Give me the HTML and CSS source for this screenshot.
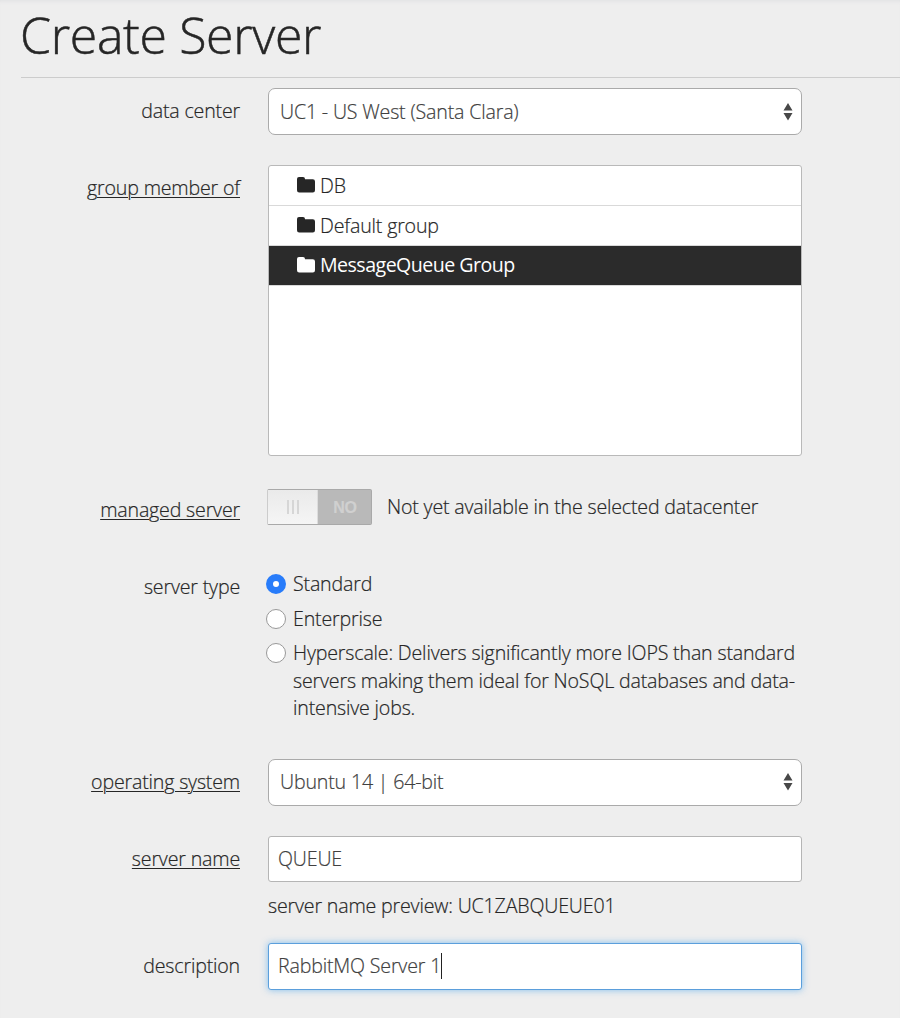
FILE: index.html
```html
<!DOCTYPE html>
<html lang="en">
<head>
<meta charset="utf-8">
<title>Create Server</title>
<link rel="stylesheet" href="styles.css">
</head>
<body>
<svg class="defs" width="0" height="0" aria-hidden="true">
  <symbol id="folder" viewBox="0 0 18 16"><path d="M2 0H6Q8 0 8 2V2.3H15.8Q18 2.3 18 4.5V13.3Q18 15.5 15.8 15.5H2.2Q0 15.5 0 13.3V2Q0 0 2 0Z" fill="currentColor"/></symbol>
  <symbol id="arrows" viewBox="0 0 10 18"><path d="M5 0L9.5 7.5H.5ZM.5 10H9.5L5 17.5Z" fill="#484848"/></symbol>
</svg>
<main class="page">
  <h1 class="title">Create Server</h1>
  <form class="form">
    <div class="row row-center">
      <span class="label">data center</span>
      <div class="field select"><span>UC1 - US West (Santa Clara)</span><svg class="arrows"><use href="#arrows"/></svg></div>
    </div>
    <div class="row row-group">
      <span class="label linked">group member of</span>
      <ul class="groups">
        <li class="group"><svg class="folder"><use href="#folder"/></svg><span>DB</span></li>
        <li class="group"><svg class="folder"><use href="#folder"/></svg><span>Default group</span></li>
        <li class="group selected"><svg class="folder"><use href="#folder"/></svg><span>MessageQueue Group</span></li>
      </ul>
    </div>
    <div class="row row-managed">
      <span class="label linked">managed server</span>
      <div class="managed">
        <div class="toggle"><span class="handle"><i></i><i></i><i></i></span><span class="no">NO</span></div>
        <span class="note">Not yet available in the selected datacenter</span>
      </div>
    </div>
    <div class="row row-type">
      <span class="label">server type</span>
      <div class="options">
        <div class="option"><span class="radio checked"></span><span>Standard</span></div>
        <div class="option"><span class="radio"></span><span>Enterprise</span></div>
        <div class="option"><span class="radio"></span><span>Hyperscale: Delivers significantly more IOPS than standard<br>servers making them ideal for NoSQL databases and data-<br>intensive jobs.</span></div>
      </div>
    </div>
    <div class="row row-os">
      <span class="label linked">operating system</span>
      <div class="field select"><span>Ubuntu 14 | 64-bit</span><svg class="arrows"><use href="#arrows"/></svg></div>
    </div>
    <div class="row row-name">
      <span class="label linked">server name</span>
      <div class="field input"><span>QUEUE</span></div>
    </div>
    <div class="preview">server name preview: UC1ZABQUEUE01</div>
    <div class="row row-desc">
      <span class="label">description</span>
      <div class="field input focused"><span>RabbitMQ Server 1</span><i class="caret"></i></div>
    </div>
  </form>
</main>
</body>
</html>
```
FILE: styles.css
```css
* { box-sizing: border-box; }
body {
  margin: 0;
  background: #eee;
  color: #262626;
  font-family: "Open Sans", sans-serif;
  font-weight: 340;
  font-size: 19.6px;
  letter-spacing: -0.17px;
  line-height: 28px;
  white-space: nowrap;
  -webkit-text-stroke: 0.2px currentColor;
}
.defs { display: block; }
.page { height: 1018px; overflow: hidden; box-shadow: inset 0 4px 4px -3px #dfe0e2; }
.title {
  margin: 0 0 0 21px;
  height: 78px;
  border-bottom: 1px solid #ccc;
  font-size: 50px;
  font-weight: 320;
  letter-spacing: -0.35px;
  line-height: 71px;
  text-indent: -1px;
  -webkit-text-stroke-width: 0.5px;
}
.form { padding-top: 10px; }
.row {
  display: grid;
  grid-template-columns: 240px 534px;
  column-gap: 28px;
  align-items: start;
}
.label { justify-self: end; margin-top: 9px; }
.linked { text-decoration: underline; text-decoration-thickness: 1px; text-underline-offset: 2px; }
.field {
  display: flex;
  align-items: center;
  height: 46px;
  background: #fff;
  border: 1px solid #b5b5b5;
  color: #404040;
}
.select { height: 47px; margin-bottom: -1px; justify-content: space-between; padding: 0 8px 0 11px; border-radius: 7px; border-color: #aaa; }
.input { padding: 0 9px; border-radius: 3px; }
.arrows { width: 10px; height: 18px; }
.row-group { margin-top: 31px; }
.groups {
  height: 291px;
  margin: 0;
  padding: 0;
  list-style: none;
  background: #fff;
  border: 1px solid #b9b9b9;
  border-radius: 3px;
}
.group {
  display: flex;
  align-items: center;
  gap: 5px;
  height: 40px;
  padding-left: 28px;
  border-bottom: 1px solid #d9d9d9;
}
.folder { width: 18px; height: 16px; margin-top: -1px; }
.group.selected { padding-bottom: 1px; background: #2b2b2b; color: #fff; font-weight: 380; letter-spacing: -0.53px; -webkit-text-stroke-width: 0; }
.row-managed { margin-top: 33px; }
.row-managed .label { margin-top: 7px; }
.managed { display: flex; margin-left: -1px; }
.toggle { display: flex; width: 105px; height: 36px; border: 1px solid #a9a9a9; border-left-color: #ccc; border-radius: 2px; background: #b9b9b9; }
.handle { display: flex; align-items: center; justify-content: center; gap: 3px; width: 50px; background: linear-gradient(#eaeaea, #f5f5f5); border-right: 1px solid #ddd; }
.handle i { width: 2px; height: 14px; background: #d6d6d6; }
.no { flex: 1; padding-left: 1px; text-align: center; font: bold 16px/36px "Liberation Sans", sans-serif; color: #d0d0d0; }
.note { margin: 4px 0 0 15px; }
.row-type { margin-top: 45px; }
.row-type .label { margin-top: 3px; }
.options { display: grid; row-gap: 7px; margin-left: -2px; line-height: 27.5px; }
.option { display: flex; align-items: flex-start; gap: 7px; }
.radio { width: 20px; height: 20px; margin-top: 4px; border: 1px solid #999; border-radius: 50%; background: #fff; flex: none; }
.checked { border: 7px solid #287cfa; }
.row-os { margin-top: 37px; }
.row-name { margin-top: 31px; }
.preview { margin: 10px 0 0 268px; }
.row-desc { margin-top: 23px; }
.focused { height: 47px; border-color: #5b9fdc; box-shadow: 0 0 7px rgba(82, 168, 236, .7); }
.caret { width: 1px; height: 26px; background: #222; }
```
